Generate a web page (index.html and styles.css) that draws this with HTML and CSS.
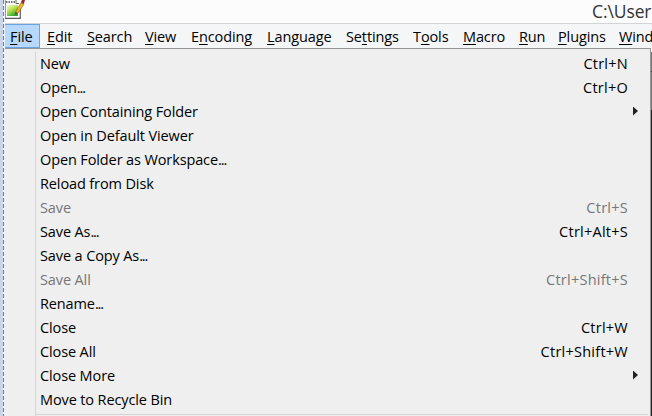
FILE: index.html
```html
<!DOCTYPE html>
<html lang="en">
<head>
<meta charset="utf-8">
<title>Editor</title>
<link rel="stylesheet" href="styles.css">
</head>
<body>
<div class="screen">
  <div class="edge"></div>
  <div class="window">
    <header class="titlebar">
      <svg class="app-icon" width="20" height="20" viewBox="0 0 20 20">
        <defs><linearGradient id="g" x1="0" y1="0" x2=".6" y2="1"><stop offset="0" stop-color="#fbfde0"/><stop offset=".5" stop-color="#b5e04a"/><stop offset="1" stop-color="#2fa53a"/></linearGradient></defs>
        <path d="M0 0H15.500V18.500H0Z" fill="#fff"/>
        <path d="M15.300 8V18.300H0" fill="none" stroke="#5c5c5c" stroke-width="1.200"/>
        <path d="M.5 0V18" stroke="#999"/>
        <path d="M2 5H13V16H2Z" fill="url(#g)"/>
        <path d="M1 2H11" stroke="#777" stroke-width="2" stroke-dasharray="1.500 1"/>
        <path d="M11 0V3.500H14" fill="none" stroke="#666"/>
        <path d="M10 14.500L11 11L16 3L19 4L13.500 12.500Z" fill="#f2b01e" stroke="#9c6413" stroke-width=".6"/>
        <path d="M15.800 2.500L17 0H20L18.800 4Z" fill="#9b2533"/>
        <path d="M10 14.500L10.800 12L12.500 13Z" fill="#443322"/>
      </svg>
      <span class="title">C:\User</span>
    </header>
    <nav class="menubar">
      <span class="open"><u>F</u>ile</span><span><u>E</u>dit</span><span><u>S</u>earch</span><span><u>V</u>iew</span><span>E<u>n</u>coding</span><span><u>L</u>anguage</span><span>Se<u>t</u>tings</span><span>T<u>o</u>ols</span><span><u>M</u>acro</span><span><u>R</u>un</span><span><u>P</u>lugins</span><span><u>W</u>ind</span>
    </nav>
    <div class="body">
      <div class="menu">
        <div class="gutter"></div>
        <ul class="items">
          <li><span>New</span><kbd>Ctrl+N</kbd></li>
          <li><span>Open<b>...</b></span><kbd>Ctrl+O</kbd></li>
          <li><span>Open Containing Folder</span><i class="arrow"></i></li>
          <li><span>Open in Default Viewer</span></li>
          <li><span>Open Folder as Workspace<b>...</b></span></li>
          <li><span>Reload from Disk</span></li>
          <li class="off"><span>Save</span><kbd>Ctrl+S</kbd></li>
          <li><span>Save As<b>...</b></span><kbd>Ctrl+Alt+S</kbd></li>
          <li><span>Save a Copy As<b>...</b></span></li>
          <li class="off"><span>Save All</span><kbd>Ctrl+Shift+S</kbd></li>
          <li><span>Rename<b>...</b></span></li>
          <li><span>Close</span><kbd>Ctrl+W</kbd></li>
          <li><span>Close All</span><kbd>Ctrl+Shift+W</kbd></li>
          <li><span>Close More</span><i class="arrow"></i></li>
          <li><span>Move to Recycle Bin</span></li>
          <li class="separator"></li>
        </ul>
      </div>
      <div class="behind"></div>
    </div>
  </div>
</div>
</body>
</html>
```
FILE: styles.css
```css
* { box-sizing: border-box; }
body { margin: 0; overflow: hidden; background: #fcfcfc; color: #000; font: 14.5px/24px "Open Sans", "Noto Sans", sans-serif; letter-spacing: -0.12px; }
.screen { display: flex; width: 652px; height: 416px; overflow: hidden; }
.edge { flex: 0 0 5px; background: repeating-linear-gradient(#3d8be0 0 4px, #fff 4px 6px) 3px 0 / 1px 100% no-repeat, linear-gradient(90deg, #ccd5e8 3px, #e8f0fa 3px); }
.window { flex: 1; min-width: 0; display: flex; flex-direction: column; }
.titlebar { height: 23px; display: flex; justify-content: space-between; overflow: hidden; }
.app-icon { display: block; flex: none; }
.title { width: 60px; font-size: 17.5px; line-height: 22px; color: #333; letter-spacing: -0.1px; white-space: nowrap; }
.menubar { height: 25px; border-top: 1px solid #d3d4d5; background: #f5f6f8; display: grid; grid-template-columns: 37px 40px 58px 46px 76px 79px 67px 50px 56px 39px 61px 60px; line-height: 25px; white-space: nowrap; }
.menubar span { padding-left: 5px; height: 24px; }
.menubar .open { width: 35px; background: #b7d8fa; border: 1px solid #67a4e3; border-left: 0; line-height: 23px; }
u { text-decoration-thickness: 1px; text-underline-offset: 2px; text-decoration-skip-ink: none; }
.body { flex: 1; display: flex; min-height: 0; }
.menu { flex: 1; display: flex; background: #efefef; border-top: 1px solid #979797; border-right: 1px solid #979797; padding: 3px 2px 0 0; }
.gutter { flex: 0 0 31px; border-right: 1px solid #d5d5d5; }
.items { flex: 1; list-style: none; margin: 0; padding: 0; }
.items li { height: 24px; padding: 0 20px 0 4px; display: flex; justify-content: space-between; align-items: center; white-space: nowrap; }
.items b { font-weight: inherit; letter-spacing: -1.1px; }
kbd { font: inherit; letter-spacing: 0.25px; }
.off { color: #777; }
.arrow { width: 5px; height: 9px; margin-right: -10px; margin-top: -2px; background: #222; clip-path: polygon(0 0, 100% 50%, 0 100%); }
.items .separator { height: 1px; margin-top: 2px; background: #d5d5d5; }
.behind { width: 1px; margin-top: 4px; background: linear-gradient(#777 0 19px, #333 19px 20px, #777 20px 58px, #222 58px); }
```
